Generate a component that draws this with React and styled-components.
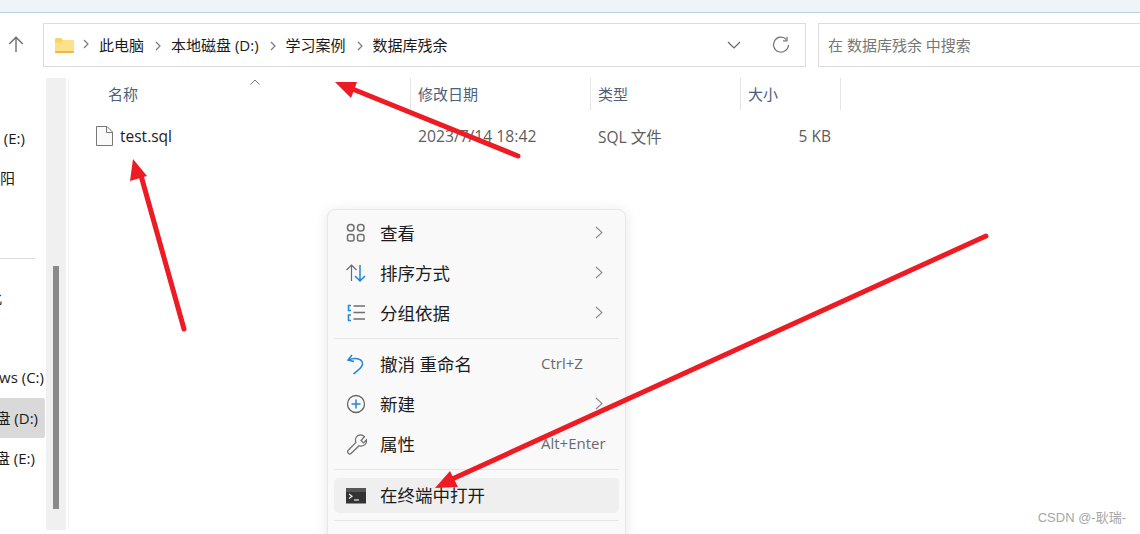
import styled, {createGlobalStyle} from "styled-components";

const GlobalStyle = createGlobalStyle`
  html, body {
    margin: 0;
    padding: 0;
    background: #fff;
    overflow: hidden;
  }

  * {
    box-sizing: border-box;
  }
`

const FONT = `"Open Sans", "Noto Sans CJK SC", sans-serif`

const Page = styled.div`
  width: 1140px;
  height: 534px;
  position: relative;
  overflow: hidden;
  background: #fff;
  font-family: ${FONT};
  color: #1b1b1b;
`

const TitleStrip = styled.div`
  height: 13px;
  background: #eff4f9;
  border-bottom: 1px solid #b9d0e4;
`

const Toolbar = styled.div`
  display: flex;
  align-items: center;
  height: 44px;
  margin-top: 10px;
`

const UpButton = styled.div`
  width: 43px;
  padding: 0 0 2px 8px;
  display: flex;
  align-items: center;
  color: #6e6e6e;
`

const AddressBar = styled.div`
  width: 763px;
  height: 44px;
  border: 1px solid #dcdcdc;
  display: flex;
  align-items: center;
  padding: 0 15px 0 11px;
  background: #fff;
`

const Crumbs = styled.div`
  flex: 1;
  display: flex;
  align-items: center;
  margin-left: -2px;
  padding-bottom: 2px;
  font-size: 15px;
  color: #1a1a1a;
`

const Crumb = styled.span`
  white-space: nowrap;
`

const CrumbSep = styled.svg`
  width: 6px;
  height: 10px;
  margin: 0 10px 0 11px;
  flex-shrink: 0;
`

const AddressTools = styled.div`
  display: flex;
  align-items: center;
  gap: 31px;
`

const SearchBox = styled.div`
  margin-left: 12px;
  flex: 1;
  height: 44px;
  border: 1px solid #dcdcdc;
  border-right: none;
  display: flex;
  align-items: center;
  padding: 0 0 2px 9px;
  font-size: 15px;
  color: #777;
`

const Body = styled.div`
  display: flex;
  margin-top: 11px;
  height: 452px;
`

const Sidebar = styled.div`
  width: 46px;
  overflow: hidden;
  padding-top: 40px;
  font-size: 15px;
`

const SideRow = styled.div`
  height: 40px;
  width: 45px;
  display: flex;
  align-items: center;
  justify-content: flex-end;
  white-space: nowrap;
  padding: 0 ${props => props.$pad}px 2px 0;
  border-radius: 0 2px 2px 0;
  background: ${props => props.$active ? '#d9d9d9' : 'transparent'};
`

const SideDivider = styled.div`
  width: 35px;
  height: 1px;
  margin: 0 0 19px;
  background: #dcdcdc;
`

const SideSpacer = styled.div`
  height: ${props => props.$h}px;
`

const ScrollTrack = styled.div`
  width: 20px;
  height: 452px;
  flex-shrink: 0;
  background: #f0f0f0;
  padding: 188px 7px 0;
`

const ScrollThumb = styled.div`
  width: 6px;
  height: 243px;
  background: #8a8a8a;
`

const FileArea = styled.div`
  flex: 1;
  margin-left: 2px;
  border-left: 1px solid #f2f2f2;
`

const HeaderRow = styled.div`
  display: flex;
  height: 32px;
  font-size: 15px;
  color: #4c607a;
`

const HeaderCell = styled.div`
  width: ${props => props.$w}px;
  padding: 0 0 2px ${props => props.$pad}px;
  border-right: 1px solid #e5e5e5;
  display: flex;
  align-items: center;
  position: relative;
`

const SortCaret = styled.svg`
  position: absolute;
  left: 181px;
  top: 1px;
  width: 10px;
  height: 6px;
`

const FileRow = styled.div`
  display: flex;
  align-items: center;
  height: 40px;
  margin-top: 6px;
  font-size: 15.5px;
  color: #5d5d5d;
`

const NameCell = styled.div`
  width: 343px;
  padding-left: 27px;
  display: flex;
  align-items: center;
  gap: 7px;
  color: #1a1a1a;
`

const DateCell = styled.div`
  width: 180px;
  padding-left: 6px;
  font-size: 15.7px;
`

const TypeCell = styled.div`
  width: 150px;
  padding-left: 6px;
`

const SizeCell = styled.div`
  width: 100px;
  text-align: right;
  padding-right: 11px;
`

const Menu = styled.div`
  position: absolute;
  left: 327px;
  top: 209px;
  width: 299px;
  height: 340px;
  background: #f9f9f9;
  border: 1px solid #e8e8e8;
  border-radius: 8px;
  box-shadow: 0 2px 14px rgba(0, 0, 0, .1);
  padding: 3px 6px;
`

const MenuItem = styled.div`
  height: ${props => props.$h || 40}px;
  display: flex;
  align-items: center;
  padding: 0 13px 0 12px;
  border-radius: 5px;
  font-size: 17.5px;
  color: #1c1c1c;
  background: ${props => props.$active ? '#efefef' : 'transparent'};
`

const MenuIcon = styled.svg`
  width: 22px;
  height: 22px;
  margin-right: 13px;
  flex-shrink: 0;
  margin-left: -1px;
`

const MenuLabel = styled.span`
  flex: 1;
  white-space: nowrap;
  padding-bottom: 2px;
`

const Shortcut = styled.span`
  width: 65px;
  font-size: 15px;
  white-space: nowrap;
  color: #6a6a6a;
  padding-bottom: 2px;
`

const Chevron = styled.svg`
  width: 8px;
  height: 13px;
  margin: 0 3px 1px 0;
`

const MenuDivider = styled.div`
  height: 1px;
  margin: ${props => props.$m};
  background: #e6e6e6;
`

const Arrows = styled.svg`
  position: absolute;
  inset: 0;
  width: 1140px;
  height: 534px;
  pointer-events: none;
`

const Watermark = styled.div`
  position: absolute;
  right: 14px;
  bottom: 8px;
  font-size: 13px;
  font-family: "Liberation Sans", "Noto Sans CJK SC", sans-serif;
  color: #a6a6a6;
`

const Sep = () => (
  <CrumbSep viewBox="0 0 6 10">
    <path d="M1 1l4 4-4 4" fill="none" stroke="#7a7a7a" strokeWidth="1.2"/>
  </CrumbSep>
)

const More = () => (
  <Chevron viewBox="0 0 8 13">
    <path d="M1 1l6 5.5L1 12" fill="none" stroke="#8a8a8a" strokeWidth="1.1"/>
  </Chevron>
)

const crumbs = ['此电脑', '本地磁盘 (D:)', '学习案例', '数据库残余']

export default function App() {
  return (
    <Page>
      <GlobalStyle/>
      <TitleStrip/>
      <Toolbar>
        <UpButton>
          <svg width="16" height="17" viewBox="0 0 16 17">
            <path d="M8 16V1.5M1.2 8L8 1.2 14.8 8" fill="none" stroke="#6e6e6e" strokeWidth="1.4"/>
          </svg>
        </UpButton>
        <AddressBar>
          <svg width="19" height="15" viewBox="0 0 19 15">
            <path d="M0 1.5A1.5 1.5 0 0 1 1.5 0h4.5l2 2h9.5A1.5 1.5 0 0 1 19 3.5V13.5A1.5 1.5 0 0 1 17.500 15h-16A1.500 1.500 0 0 1 0 13.500z" fill="#fbd35f"/>
            <path d="M0 4.500h6.500l2-2.500H17.500A1.500 1.500 0 0 1 19 3.500V13.500A1.500 1.500 0 0 1 17.500 15h-16A1.500 1.500 0 0 1 0 13.500z" fill="#fde08c"/>
            <path d="M0 13h19v.5A1.500 1.500 0 0 1 17.500 15h-16A1.500 1.500 0 0 1 0 13.500z" fill="#eeb93c"/>
          </svg>
          <Crumbs>
            <Sep/>
            {crumbs.map((c, i) => (
              <Crumb key={c}>
                {c}
                {i < crumbs.length - 1 && <Sep/>}
              </Crumb>
            ))}
          </Crumbs>
          <AddressTools>
            <svg width="14" height="9" viewBox="0 0 14 9">
              <path d="M1 1l6 6 6-6" fill="none" stroke="#666" strokeWidth="1.2"/>
            </svg>
            <svg width="18" height="18" viewBox="0 0 18 18">
              <path d="M14.500 3.500A7.500 7.500 0 1 0 16.500 9" fill="none" stroke="#777" strokeWidth="1.200"/>
              <path d="M15 .8v4h-4" fill="none" stroke="#777" strokeWidth="1.200"/>
            </svg>
          </AddressTools>
        </AddressBar>
        <SearchBox>在 数据库残余 中搜索</SearchBox>
      </Toolbar>
      <Body>
        <Sidebar>
          <SideRow $pad={20}>本地磁盘 (E:)</SideRow>
          <SideRow $pad={30}>太阳</SideRow>
          <SideSpacer $h={60}/>
          <SideDivider/>
          <SideRow $pad={43}>此</SideRow>
          <SideSpacer $h={40}/>
          <SideRow $pad={1}>Windows (C:)</SideRow>
          <SideRow $pad={7} $active>本地磁盘 (D:)</SideRow>
          <SideRow $pad={10}>本地磁盘 (E:)</SideRow>
        </Sidebar>
        <ScrollTrack>
          <ScrollThumb/>
        </ScrollTrack>
        <FileArea>
          <HeaderRow>
            <HeaderCell $w={342} $pad={39}>
              <SortCaret viewBox="0 0 10 6">
                <path d="M.5 5.500L5 1l4.500 4.500" fill="none" stroke="#777" strokeWidth="1"/>
              </SortCaret>
              名称
            </HeaderCell>
            <HeaderCell $w={180} $pad={7}>修改日期</HeaderCell>
            <HeaderCell $w={150} $pad={7}>类型</HeaderCell>
            <HeaderCell $w={100} $pad={7}>大小</HeaderCell>
          </HeaderRow>
          <FileRow>
            <NameCell>
              <svg width="17" height="20" viewBox="0 0 17 20">
                <path d="M.5.5h10.500l5.500 5.500v13.500H.5z" fill="#fafafa" stroke="#777"/>
                <path d="M10.500.5v6h6" fill="none" stroke="#777"/>
              </svg>
              test.sql
            </NameCell>
            <DateCell>2023/7/14 18:42</DateCell>
            <TypeCell>SQL 文件</TypeCell>
            <SizeCell>5 KB</SizeCell>
          </FileRow>
        </FileArea>
      </Body>

      <Menu>
        <MenuItem>
          <MenuIcon viewBox="0 0 22 22">
            <g fill="none" stroke="#6f6f6f" strokeWidth="1.500">
              <rect x="2.500" y="2.500" width="6.500" height="6.500" rx="3"/>
              <rect x="12.500" y="2.500" width="6.500" height="6.500" rx="3"/>
              <rect x="2.500" y="12.500" width="6.500" height="6.500" rx="2"/>
              <rect x="12.500" y="12.500" width="6.500" height="6.500" rx="2"/>
            </g>
          </MenuIcon>
          <MenuLabel>查看</MenuLabel>
          <More/>
        </MenuItem>
        <MenuItem>
          <MenuIcon viewBox="0 0 22 22">
            <path d="M6.500 19V3M1.500 8l5-5 5 5" fill="none" stroke="#6a6a6a" strokeWidth="1.200"/>
            <path d="M15 3v16M10 14l5 5 5-5" fill="none" stroke="#1f86d8" strokeWidth="1.500"/>
          </MenuIcon>
          <MenuLabel>排序方式</MenuLabel>
          <More/>
        </MenuItem>
        <MenuItem>
          <MenuIcon viewBox="0 0 22 22">
            <path d="M6 3.500H3.500v5H6M6 13H3.500v5.500H6" fill="none" stroke="#1f86d8" strokeWidth="1.500"/>
            <path d="M8.500 4h11.500M8.500 10.500h11.500M8.500 17h11.500" fill="none" stroke="#6f6f6f" strokeWidth="1.500"/>
          </MenuIcon>
          <MenuLabel>分组依据</MenuLabel>
          <More/>
        </MenuItem>
        <MenuDivider $m="5px 0 5px"/>
        <MenuItem>
          <MenuIcon viewBox="0 0 22 22">
            <path d="M7 2L3 7l6 1.500M3.500 7C9 4.500 17 5 17.500 10.500 18 15 12 17.500 8.500 21" fill="none" stroke="#1f86d8" strokeWidth="1.500"/>
          </MenuIcon>
          <MenuLabel>撤消 重命名</MenuLabel>
          <Shortcut>Ctrl+Z</Shortcut>
        </MenuItem>
        <MenuItem>
          <MenuIcon viewBox="0 0 22 22">
            <circle cx="11" cy="11" r="8.500" fill="none" stroke="#666" strokeWidth="1.300"/>
            <path d="M11 6.500v9M6.500 11h9" fill="none" stroke="#1f86d8" strokeWidth="1.500"/>
          </MenuIcon>
          <MenuLabel>新建</MenuLabel>
          <More/>
        </MenuItem>
        <MenuItem>
          <MenuIcon viewBox="0 0 22 22">
            <path d="M13 2.500a5.500 5.500 0 0 1 6.500 1.200L16 7.500l2.500 2.500 3-3.300a5.500 5.500 0 0 1-7.500 6L6 20.500c-1.500 1.500-4.700-1.200-3-3l8-8a5.500 5.500 0 0 1 2-7z" fill="none" stroke="#6c6c6c" strokeWidth="1.200"/>
          </MenuIcon>
          <MenuLabel>属性</MenuLabel>
          <Shortcut>Alt+Enter</Shortcut>
        </MenuItem>
        <MenuDivider $m="5px 0 8px"/>
        <MenuItem $h={35} $active>
          <MenuIcon viewBox="0 0 22 22">
            <rect x="1" y="3" width="20" height="15.500" fill="#333"/>
            <rect x="1" y="3" width="20" height="4" fill="#555"/>
            <path d="M4 9l3 2.200L4 13.500" fill="none" stroke="#eee" strokeWidth="1.200"/>
            <path d="M9 15h5" stroke="#eee" strokeWidth="1.200"/>
          </MenuIcon>
          <MenuLabel>在终端中打开</MenuLabel>
        </MenuItem>
        <MenuDivider $m="7px 0 0"/>
      </Menu>

      <Watermark>CSDN @-耿瑞-</Watermark>

      <Arrows viewBox="0 0 1140 534">
        <g stroke="#ed1c24" strokeWidth="5" strokeLinecap="round" fill="#ed1c24">
          <path d="M518 156L350 88" fill="none"/>
          <path d="M184 329L140 172" fill="none"/>
          <path d="M986 236L450 480" fill="none"/>
        </g>
        <g fill="#ed1c24">
          <path d="M335 82L357 82L351 98z"/>
          <path d="M133 159L147 176L130 181z"/>
          <path d="M435 488L450 471L458 487z"/>
        </g>
      </Arrows>
    </Page>
  )
}
